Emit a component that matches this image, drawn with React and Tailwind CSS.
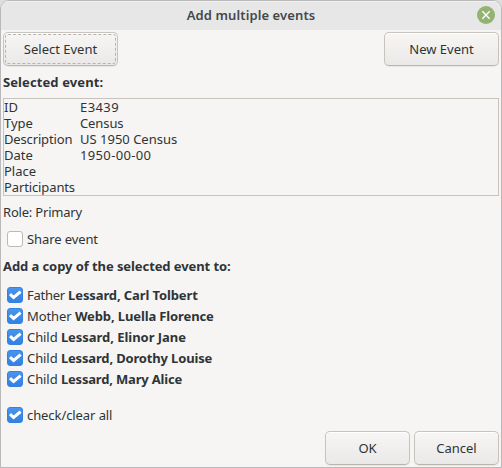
import { useState } from "react";

const details = [
  ["ID", "E3439", "", "tracking-[0.4px]"],
  ["Type", "Census", "", "tracking-[-0.1px]"],
  ["Description", "US 1950 Census", "tracking-[-0.15px]", ""],
  ["Date", "1950-00-00", "", "tracking-[0.35px]"],
  ["Place", "", "", ""],
  ["Participants", "", "tracking-[-0.12px]", ""],
];

const people = [
  ["Father", "Lessard, Carl Tolbert", "tracking-[-0.25px]", "tracking-[-0.11px]"],
  ["Mother", "Webb, Luella Florence", "tracking-[-0.08px]", "tracking-[-0.12px]"],
  ["Child", "Lessard, Elinor Jane", "tracking-[-0.08px]", "tracking-[-0.04px]"],
  ["Child", "Lessard, Dorothy Louise", "tracking-[-0.08px]", "tracking-[-0.16px]"],
  ["Child", "Lessard, Mary Alice", "tracking-[-0.08px]", "tracking-[-0.18px]"],
];

function Button({ children, className = "", focused = false }) {
  return (
    <button
      className={`h-[34px] rounded-[5px] border border-[#c8c3bd] border-b-[#b9b4ae] bg-linear-to-b from-[#f7f6f5] to-[#eae9e8] p-px shadow-[0_1px_1px_rgba(0,0,0,0.06),inset_0_1px_0_#fff] ${className}`}
    >
      <span
        className={`flex h-full items-center justify-center rounded-[3px] border border-dashed ${focused ? "border-[#b4b3b2]" : "border-transparent"}`}
      >
        {children}
      </span>
    </button>
  );
}

function CheckRow({ checked, onChange, children, className = "" }) {
  return (
    <label className={`flex h-[21px] items-center pt-px pl-[6px] ${className}`}>
      <input type="checkbox" className="sr-only" checked={checked} onChange={onChange} />
      <span
        className={`mr-1 flex size-4 shrink-0 items-center justify-center rounded-[3px] border ${checked ? "border-[#3482e3] bg-linear-to-b from-[#4a94ea] to-[#3281e3]" : "border-[#bfb9b2] bg-white"}`}
      >
        {checked && (
          <svg viewBox="0 0 14 14" className="size-[14px]" fill="none" stroke="#fff" strokeWidth="3">
            <path d="M2 6.2 5.6 9.4 12.6 3.6" />
          </svg>
        )}
      </span>
      <span className="whitespace-pre">{children}</span>
    </label>
  );
}

export default function App() {
  const [share, setShare] = useState(false);
  const [checks, setChecks] = useState(people.map(() => true));
  const all = checks.every(Boolean);

  return (
    <div className="h-[468px] w-[502px] bg-[#dededd]">
      <div className="flex h-full flex-col overflow-hidden rounded-t-[9px] border border-[#b9b9b9] bg-[#f6f5f4] font-['Noto_Sans',sans-serif] text-[13px] leading-4 text-[#2e3436]">
        <header className="grid h-[29px] shrink-0 grid-cols-[30px_1fr_30px] items-center bg-[#e7e7e7] shadow-[inset_0_1px_0_#f1f1f1]">
          <h1 className="col-start-2 -mt-px text-center font-semibold tracking-[0.1px] text-[#45484b]">Add multiple events</h1>
          <button aria-label="Close" className="-mt-px ml-[6px] flex size-[18px] items-center justify-center rounded-full bg-[#92b372]">
            <svg viewBox="0 0 18 18" className="size-[18px]" stroke="#fff" strokeWidth="1.4">
              <path d="M5.3 5.3 12.7 12.7M12.7 5.3 5.3 12.7" />
            </svg>
          </button>
        </header>
        <main className="flex flex-1 flex-col px-[2px] pt-[2px]">
          <div className="flex justify-between">
            <Button className="w-[115px]" focused>Select Event</Button>
            <Button className="w-[115px]">New Event</Button>
          </div>
          <h2 className="mt-[8px] h-[16px] font-bold tracking-[0.1px]">Selected event:</h2>
          <dl className="mt-[8px] h-[98px] border border-[#c8c3bd]">
            {details.map(([name, value, nameClass, valueClass]) => (
              <div key={name} className="grid h-4 grid-cols-[76px_1fr]">
                <dt className={nameClass}>{name}</dt>
                <dd className={valueClass}>{value}</dd>
              </div>
            ))}
          </dl>
          <p className="mt-[8px] h-4 tracking-[-0.2px]">Role: Primary</p>
          <CheckRow checked={share} onChange={() => setShare(!share)} className="mt-[8px] -ml-[2px] tracking-[-0.1px]">
            Share event
          </CheckRow>
          <h2 className="mt-[9px] h-4 font-bold tracking-[-0.08px]">Add a copy of the selected event to:</h2>
          <div className="mt-[10px] -ml-[2px]">
            {people.map(([role, name, roleClass, nameClass], i) => (
              <CheckRow key={name} checked={checks[i]} onChange={() => setChecks(checks.map((c, j) => (j === i ? !c : c)))}>
                <span className={roleClass}>{role} </span>
                <b className={nameClass}>{name}</b>
              </CheckRow>
            ))}
          </div>
          <CheckRow checked={all} onChange={() => setChecks(checks.map(() => !all))} className="mt-[15px] -ml-[2px] tracking-[-0.08px]">
            check/clear all
          </CheckRow>
          <footer className="mt-[6px] flex justify-end gap-[4px]">
            <Button className="w-[85px]">OK</Button>
            <Button className="w-[85px]">Cancel</Button>
          </footer>
        </main>
      </div>
    </div>
  );
}
